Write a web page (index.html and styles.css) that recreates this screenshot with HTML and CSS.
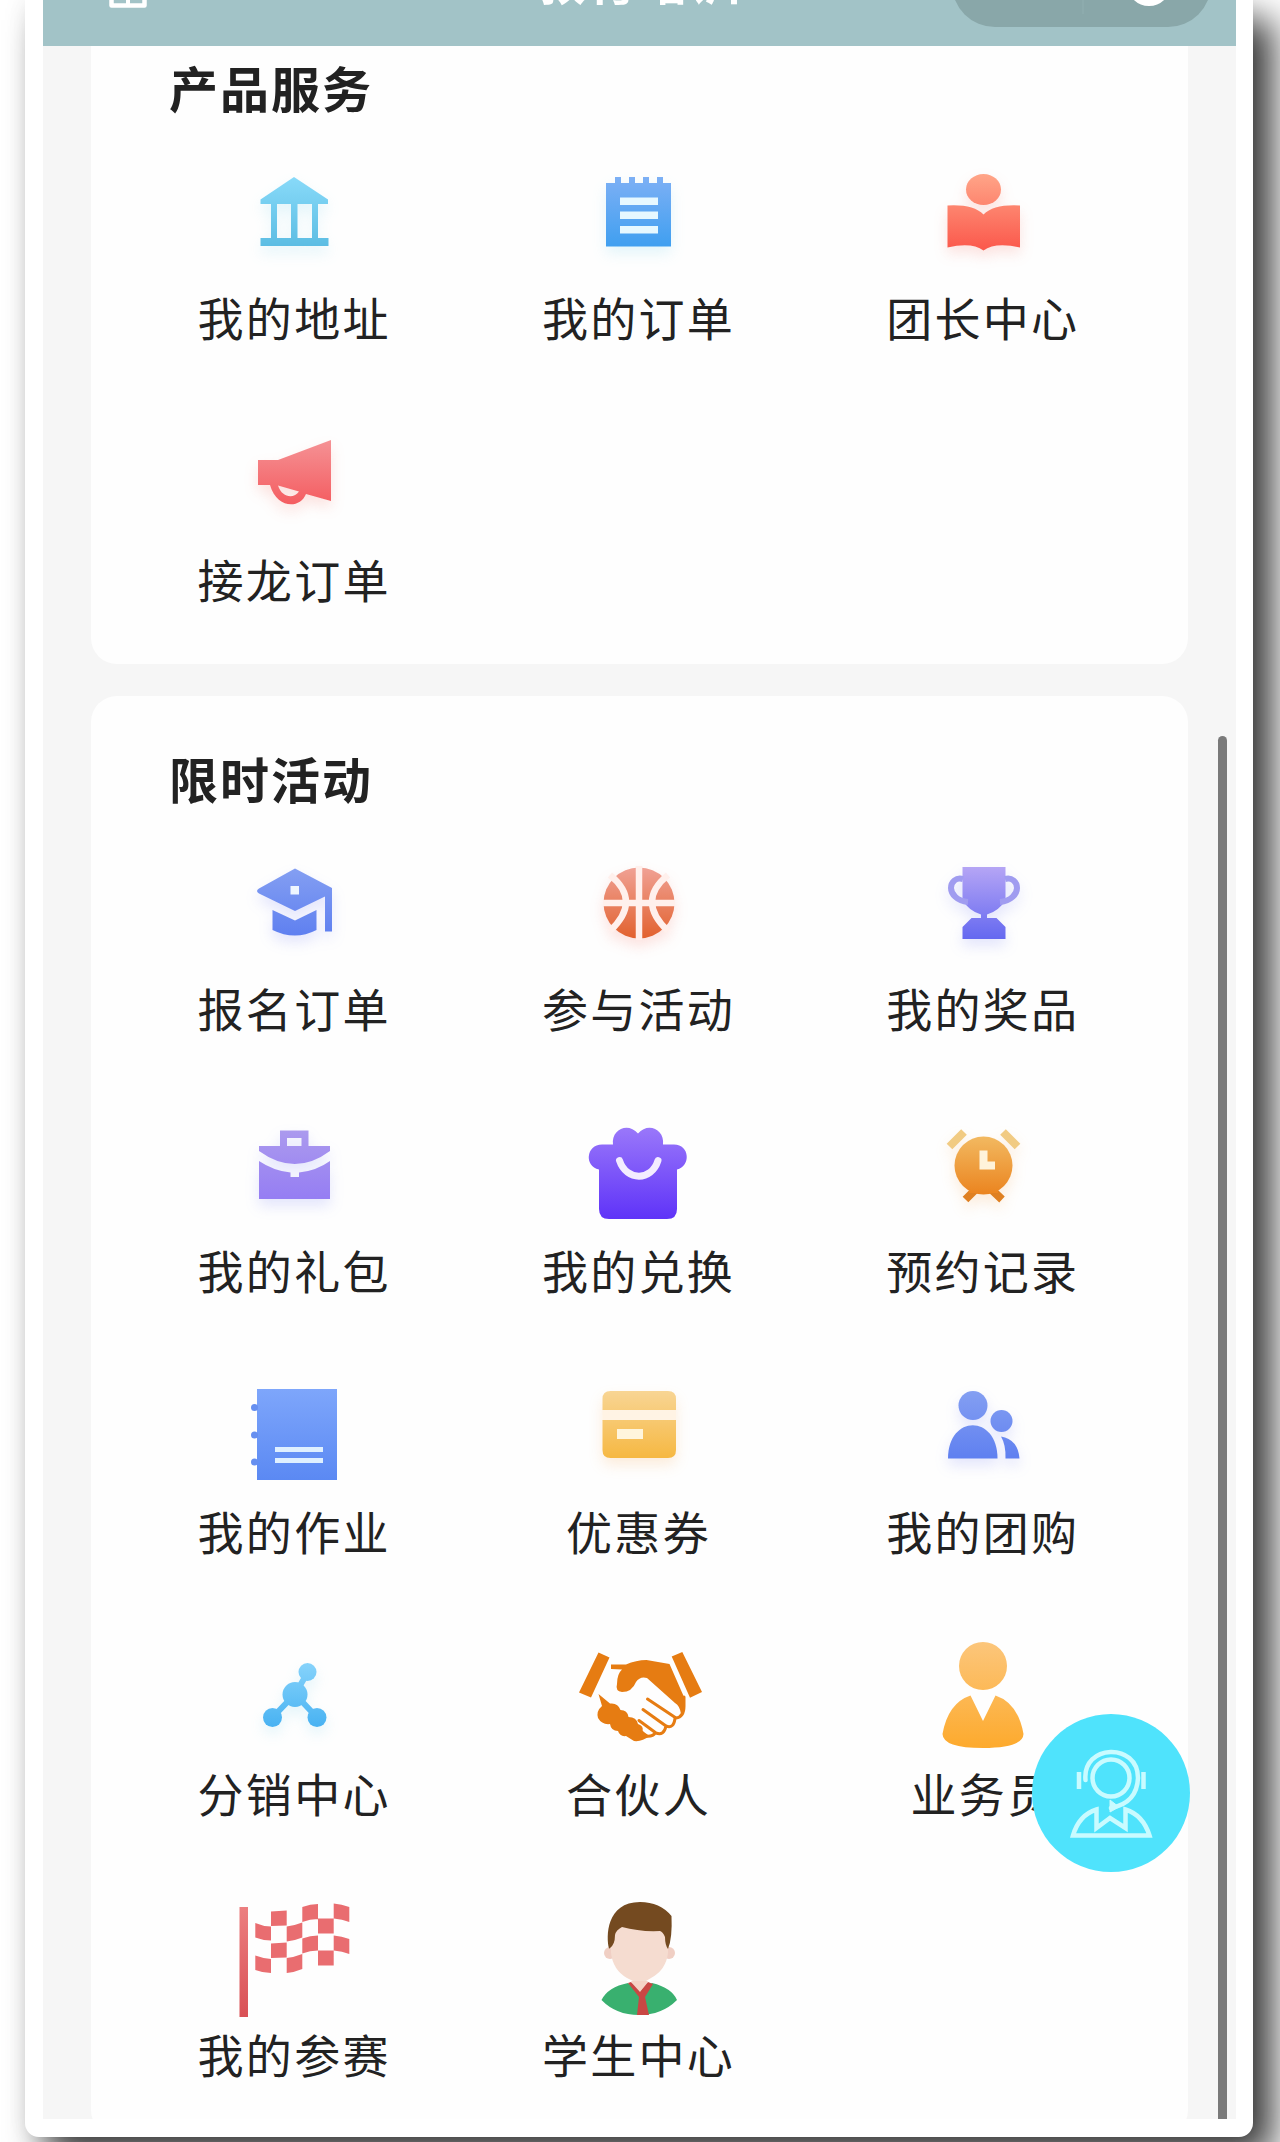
FILE: index.html
```html
<!DOCTYPE html>
<html lang="zh-CN">
<head>
<meta charset="utf-8">
<title>教育培训</title>
<link rel="stylesheet" href="styles.css">
</head>
<body>
<svg class="defs" width="0" height="0" aria-hidden="true">
  <defs>
    <linearGradient id="sky" x1="0" y1="0" x2="0" y2="1"><stop offset="0" stop-color="#88daf9"/><stop offset="1" stop-color="#5cbde3"/></linearGradient>
    <linearGradient id="blue" gradientUnits="userSpaceOnUse" x1="0" y1="27" x2="0" y2="97"><stop offset="0" stop-color="#7db0f5"/><stop offset="1" stop-color="#3f9ff0"/></linearGradient>
    <linearGradient id="coral" gradientUnits="userSpaceOnUse" x1="0" y1="24" x2="0" y2="98"><stop offset="0" stop-color="#ffa588"/><stop offset="1" stop-color="#fb5a4d"/></linearGradient>
    <linearGradient id="rose" gradientUnits="userSpaceOnUse" x1="0" y1="28" x2="0" y2="92"><stop offset="0" stop-color="#f59295"/><stop offset="1" stop-color="#f45d61"/></linearGradient>
    <linearGradient id="indigo" gradientUnits="userSpaceOnUse" x1="0" y1="27" x2="0" y2="96"><stop offset="0" stop-color="#849ff2"/><stop offset="1" stop-color="#5e7ff0"/></linearGradient>
    <linearGradient id="ball" gradientUnits="userSpaceOnUse" x1="0" y1="27" x2="0" y2="97"><stop offset="0" stop-color="#f0a194"/><stop offset="1" stop-color="#e2622f"/></linearGradient>
    <linearGradient id="cup" gradientUnits="userSpaceOnUse" x1="0" y1="26" x2="0" y2="98"><stop offset="0" stop-color="#b5a5f5"/><stop offset="1" stop-color="#6468f0"/></linearGradient>
    <linearGradient id="lilac" gradientUnits="userSpaceOnUse" x1="0" y1="27" x2="0" y2="97"><stop offset="0" stop-color="#ab9aee"/><stop offset="1" stop-color="#957df3"/></linearGradient>
    <linearGradient id="violet" gradientUnits="userSpaceOnUse" x1="0" y1="24" x2="0" y2="116"><stop offset="0" stop-color="#9a78fa"/><stop offset="1" stop-color="#5f33f8"/></linearGradient>
    <linearGradient id="orange" gradientUnits="userSpaceOnUse" x1="0" y1="27" x2="0" y2="97"><stop offset="0" stop-color="#f3bf68"/><stop offset="1" stop-color="#ea7f19"/></linearGradient>
    <linearGradient id="book" gradientUnits="userSpaceOnUse" x1="0" y1="25" x2="0" y2="116"><stop offset="0" stop-color="#7ea6fb"/><stop offset="1" stop-color="#5b89f3"/></linearGradient>
    <linearGradient id="sand" gradientUnits="userSpaceOnUse" x1="0" y1="27" x2="0" y2="94"><stop offset="0" stop-color="#f8d594"/><stop offset="1" stop-color="#f6b842"/></linearGradient>
    <linearGradient id="aqua" gradientUnits="userSpaceOnUse" x1="0" y1="37" x2="0" y2="101"><stop offset="0" stop-color="#86d3fb"/><stop offset="1" stop-color="#48b2f2"/></linearGradient>
    <linearGradient id="amber" gradientUnits="userSpaceOnUse" x1="0" y1="16" x2="0" y2="122"><stop offset="0" stop-color="#fcc67b"/><stop offset="1" stop-color="#fdaa2d"/></linearGradient>
    <linearGradient id="pole" x1="0" y1="0" x2="0" y2="1"><stop offset="0" stop-color="#ec7f80"/><stop offset="1" stop-color="#d95055"/></linearGradient>
  </defs>
</svg>

<div class="phone">
  <div class="screen">
    <header class="navbar">
      <svg class="home" viewBox="0 0 38 38"><path d="M2.500 12 19 2l16.500 10v23.500h-33z" fill="none" stroke="#fff" stroke-width="4.500" stroke-linejoin="round"/><path d="M19 18v17M4 27h30" stroke="#fff" stroke-width="4"/></svg>
      <h1 class="nav-title">教育培训</h1>
      <div class="capsule"><span class="divider"></span><span class="ring"></span></div>
    </header>

    <main class="cards">
      <section class="card card-services">
        <h2 class="card-title">产品服务</h2>
        <div class="grid">
          <a class="item"><svg class="icon glow-sky" viewBox="0 0 140 130"><path fill="url(#sky)" d="M70 27 104 49.500V54H94v34h10.500v8h-68v-8H47V54H36.500v-4.500zM53 54v34h14V54zM73.500 54v34H88V54z"/></svg><span class="label">我的地址</span></a>
          <a class="item"><svg class="icon glow-sky" viewBox="0 0 140 130"><path fill="url(#blue)" d="M38 33h9v-6h6v6h8v-6h6v6h8v-6h6v6h8v-6h6v6h8v63.500H38z"/><path fill="#e6f8ff" d="M52 47.500h38v7.500H52zM52 61.500h38V69H52zM52 76h38v7.500H52z"/></svg><span class="label">我的订单</span></a>
          <a class="item"><svg class="icon glow-red" viewBox="0 0 140 130"><g fill="url(#coral)"><ellipse cx="70.500" cy="39.500" rx="17.500" ry="15.500"/><path d="M34.500 55.500Q60 54 70.500 64.500 81 54 107 55.500v42Q82 92 70.500 100.500 59 92 34.500 97.500z"/></g></svg><span class="label">团长中心</span></a>
          <a class="item"><svg class="icon glow-red" viewBox="0 0 140 130"><path fill="url(#rose)" d="M34 48h20l53-20v61L82 82C76 97 53 97 46 73H34zM54 73.500C58 86 70 87 75 79.500z"/></svg><span class="label">接龙订单</span></a>
        </div>
      </section>

      <section class="card card-events">
        <h2 class="card-title">限时活动</h2>
        <div class="grid">
          <a class="item"><svg class="icon glow-blue" viewBox="0 0 140 130"><path fill="url(#indigo)" d="M71 27.500 108 47v43.500h-7V55.500L71 70 35 52.500q-4-2.500 0-5z"/><path fill="url(#indigo)" d="M48.500 69 71 79.500 92.500 69v20Q71 100 48.500 89z"/><path fill="#eef6ff" d="M66.500 45h8.500v8.500h-8.500z"/></svg><span class="label">报名订单</span></a>
          <a class="item"><svg class="icon glow-red" viewBox="0 0 140 130"><circle cx="71" cy="62" r="35.500" fill="url(#ball)"/><path d="M71 25v74M35 62h72M42 34q32 26 0 56M100 34q-32 26 0 56" fill="none" stroke="#fff0ec" stroke-width="6.500"/></svg><span class="label">参与活动</span></a>
          <a class="item"><svg class="icon glow-blue" viewBox="0 0 140 130"><path fill="url(#cup)" d="M49.500 26h43v33Q86 70 74 73.500V77h9.500l9 9v12h-43V86l9-9H68v-3.500Q56 70 49.500 59z"/><path d="M50 38c-7-2-12 3-12 9s6 13 17 14M92 38c7-2 12 3 12 9s-6 13-17 14" fill="none" stroke="#a09cf0" stroke-width="6"/></svg><span class="label">我的奖品</span></a>

          <a class="item"><svg class="icon glow-blue" viewBox="0 0 140 130"><path fill="url(#lilac)" d="M56 27.500h28.500v15.500H106v5Q71 74 35 48v-5h21zM63 35v8h14.500v-8z"/><path fill="url(#lilac)" d="M35 58q15 10 31.500 11.500V74H75v-4.500Q92 68 106 58v38H35z"/></svg><span class="label">我的礼包</span></a>
          <a class="item"><svg class="icon" viewBox="0 0 140 130"><path fill="url(#violet)" d="M45 41.500c-2-15 15-23 25-11 10-12 27-4 25 11h11c16 0 17 22 3 25V106q0 10-10 10H41q-10 0-10-10V66.500c-15-3-13-25 3-25z"/><path d="M51.500 57.500c7 21 32 21 38.500 0" fill="none" stroke="#f3ecff" stroke-width="7" stroke-linecap="round"/></svg><span class="label">我的兑换</span></a>
          <a class="item"><svg class="icon glow-orange" viewBox="0 0 140 130"><path d="M36.500 43.500 51 29M104.500 43.500 90 29" stroke="#f1cb83" stroke-width="8"/><path d="M52.500 96.500 62 87M89 96.500 79 87" stroke="#df8022" stroke-width="8"/><circle cx="70.500" cy="62.500" r="29" fill="url(#orange)"/><path fill="url(#orange)" d="M56 84h29v6H56z"/><path fill="#fff3da" d="M66.500 47.500h8v11H82v8H66.500z"/></svg><span class="label">预约记录</span></a>

          <a class="item"><svg class="icon" viewBox="0 0 140 130"><path fill="url(#book)" d="M33 25h80v91H33z"/><g fill="#668ff0"><circle cx="30.500" cy="43.500" r="3.500"/><circle cx="30.500" cy="71" r="3.500"/><circle cx="30.500" cy="98" r="3.500"/></g><path fill="#dff0ff" d="M51 83h48v5H51zM51 94h48v5H51z"/></svg><span class="label">我的作业</span></a>
          <a class="item"><svg class="icon glow-orange" viewBox="0 0 140 130"><path fill="#fff3e4" d="M34.500 45H108v12H34.500z"/><path fill="url(#sand)" d="M34.500 46V35q0-8 8-8H100q8 0 8 8v11zM34.500 56H108v30q0 8-8 8H42.500q-8 0-8-8z"/><path fill="#fff5dc" d="M49 65h26v10H49z"/></svg><span class="label">优惠券</span></a>
          <a class="item"><svg class="icon glow-blue" viewBox="0 0 140 130"><g fill="url(#indigo)"><circle cx="60" cy="41.500" r="14.500"/><path d="M35 94.500C35 50 84.500 50 84.500 94.500z"/><circle cx="88.500" cy="57" r="11"/><path d="M88 72.500q17 3 18.500 22H92.500Q93 81 88 72.500z"/></g></svg><span class="label">我的团购</span></a>

          <a class="item"><svg class="icon glow-sky" viewBox="0 0 140 130"><path d="M84 46 71 68 48.500 91.500M71 68l22 23.500" fill="none" stroke="url(#aqua)" stroke-width="6"/><g fill="url(#aqua)"><circle cx="83.500" cy="46" r="9"/><circle cx="71" cy="68.500" r="12.500"/><circle cx="48.500" cy="91.500" r="9.500"/><circle cx="93" cy="91.500" r="9.500"/></g></svg><span class="label">分销中心</span></a>
          <a class="item"><svg class="icon" viewBox="0 0 140 130"><g fill="#e67c12"><path d="M30.500 26.500 41.500 31.500 23 71.500 11 66.500zM103.700 30.500 114.300 26 134 66 122 71.800z"/><path d="M43 38.500H58Q68 34 78.500 34L101.500 38 116 71Q118 82 113 88 112 80 107 77L79 52Q72 50 68 56 64 66 54 66 47 65 49 58 49 48 54 43.500L43 43z"/><path d="M30.500 68 42 77.500q8-1 10.500 6.500 7 0 8 7 8 0 9.500 7 6 2 4.500 7l7 5Q74 116 66 115l-8-5q-6 1-8-5-7 0-8-7-8 1-12-6-2-7 4-12z"/></g><path d="M79.500 73 108 92q8-1 8-12v-9M75 83.500 98 100q8 3 9-8M71 94.500 88 107q8 3 10-7M72 104l5 6q8 1 10-3" fill="none" stroke="#e67c12" stroke-width="3" stroke-linecap="round" stroke-linejoin="round"/></svg><span class="label">合伙人</span></a>
          <a class="item"><svg class="icon" viewBox="0 0 140 130"><g fill="url(#amber)"><circle cx="70" cy="40" r="24"/><path d="M57.500 69.500 70 95 82.500 69.500Q105 77 110.500 108 110 122 70 122 30 122 29.500 108 35 77 57.500 69.500z"/></g></svg><span class="label">业务员</span></a>

          <a class="item"><svg class="icon" viewBox="0 0 140 130"><path fill="url(#pole)" d="M15.500 20H24v110h-8.500z"/><path fill="#e96d70" d="M31.300 36q8 3.500 15.700 3.500v14q-8 0-15.700-3zM31.300 68.500q8 3 15.700 3.500V86q-8 0-15.700-3zM47 24.500l15.700-1v15L47 39zM47 56.500l15.700-1v15L47 71zM62.700 39.500q8-1 15.600-4v15q-7 3-15.600 4zM62.700 71q8-1 15.600-4v15q-7 3-15.600 4zM78.300 20q8-3 15.700-3v15q-8 0-15.700 3zM78.300 51.500q8-3 15.700-3v15q-8 0-15.700 3zM94 31.500h15.700v15H94zM94 63.500h15.700v15H94zM109.700 16.500q8 .5 15.600 3.500v15q-7-3-15.600-3.500zM109.700 48.500q8 .5 15.600 3.500v15q-7-3-15.600-3.500z"/></svg><span class="label">我的参赛</span></a>
          <a class="item"><svg class="icon" viewBox="0 0 140 130"><g fill="#f0cfc4"><circle cx="42" cy="66" r="6"/><circle cx="101" cy="66" r="6"/></g><path fill="#f5dcd0" d="M43 36h57v30Q98 83 83 91l-5 3 3 10H62l3-10-6-3Q45 83 43 66z"/><path fill="#744a20" d="M41 61.500C38 50 38 15 72 15q20 0 31.500 14 1 22-3.500 33-3-4-3-12-2-5-5-6-20 1-38-4-6 3-7 8 0 10-5.500 13.500z"/><path fill="#39b06f" d="M33.500 113Q40 100 60 96l11 8 13-8q20 5 25 17-15 15-38 15t-37.500-15z"/><path fill="#f5d3c6" d="M63 94h17l-8 12z"/><path fill="#c94744" d="M60 96l3-1 9 10 8-10 5 2-8 13 4 18H69l2-18z"/></svg><span class="label">学生中心</span></a>
        </div>
      </section>
    </main>

    <div class="scrollbar"></div>
    <a class="service-button"><svg viewBox="0 0 158 158" fill="none" stroke="#c9fbff" stroke-width="4.500"><circle cx="79" cy="64" r="18.500"/><path d="M53.500 66C50 30 106 28 106 64q-1 25-27 30" stroke-linecap="round"/><path d="M78 86v12l9-5z" fill="#c9fbff" stroke-width="1"/><path d="M47 58v17M111.500 58v17"/><path d="M64.500 95.500v18.500l13.500-10 15.500 10V95.500Q111 101 117.500 121.500h-76.500Q47 101 64.500 95.500z"/></svg></a>
  </div>
</div>
</body>
</html>
```
FILE: styles.css
```css
* { box-sizing: border-box; }

body {
  margin: 0;
  height: 2142px;
  overflow: hidden;
  background: #fff;
  color: #222;
  font-family: "Noto Sans CJK SC", "Noto Sans", sans-serif;
}

.defs { position: absolute; }

.phone {
  width: 1228px;
  height: 2137px;
  margin-left: 25px;
  padding: 0 17px 18px 18px;
  background: #fff;
  border-radius: 0 0 14px 14px;
  box-shadow: 20px 20px 36px rgba(0, 0, 0, .78), 0 0 20px rgba(0, 0, 0, .06);
}

.screen {
  position: relative;
  height: 2119px;
  overflow: hidden;
  background: #f6f6f6;
}

.navbar {
  display: grid;
  grid-template-columns: minmax(0, 1fr) auto minmax(0, 1fr);
  grid-template-rows: 46px;
  align-items: end;
  height: 46px;
  overflow: hidden;
  padding: 0 25px;
  background: #a2c3c7;
}

.home { width: 38px; height: 38px; margin: 0 0 38px 41px; }

.nav-title {
  margin: 0 0 43px;
  color: #fff;
  font-size: 49px;
  font-weight: 700;
  line-height: 48px;
  letter-spacing: 2.500px;
}

.capsule {
  display: flex;
  justify-content: space-between;
  align-items: center;
  justify-self: end;
  width: 259px;
  height: 86px;
  margin-bottom: 19px;
  padding: 0 40px 0 130px;
  border-radius: 43px;
  background: #89a7a9;
}

.divider { width: 2px; height: 60px; background: #8dabad; }
.ring { width: 44px; height: 44px; border: 6px solid #fff; border-radius: 50%; }

.cards {
  display: flex;
  flex-direction: column;
  gap: 32px;
  padding: 0 48px;
}

.card { background: #fefefe; border-radius: 26px; padding: 0 33px 0 31px; }
.card-services { height: 618px; padding-top: 11px; border-radius: 0 0 26px 26px; }
.card-events { height: 1440px; padding-top: 52px; }

.card-title {
  height: 60px;
  margin: 0 0 33px 47px;
  font-size: 49px;
  font-weight: 700;
  line-height: 60px;
  letter-spacing: 2px;
}

.grid { display: grid; grid-template-columns: repeat(3, 1fr); grid-auto-rows: 261.500px; }
.item { display: flex; flex-direction: column; align-items: center; }
.icon { width: 140px; height: 130px; overflow: visible; }
.label {
  margin-top: 6px;
  font-size: 46px;
  line-height: 60px;
  letter-spacing: 2.300px;
  white-space: nowrap;
}

.glow-sky { filter: drop-shadow(0 7px 7px rgba(90, 200, 230, .16)); }
.glow-red { filter: drop-shadow(0 7px 7px rgba(240, 80, 60, .16)); }
.glow-blue { filter: drop-shadow(0 7px 7px rgba(90, 100, 240, .16)); }
.glow-orange { filter: drop-shadow(0 7px 7px rgba(240, 140, 40, .16)); }

/* Overlays above the scrolling content */
.scrollbar {
  position: absolute;
  top: 736px;
  right: 9px;
  width: 9px;
  height: 1383px;
  border-radius: 5px 5px 0 0;
  background: #7a7a7a;
}

.service-button {
  position: absolute;
  top: 1714px;
  right: 46px;
  width: 158px;
  height: 158px;
  border-radius: 50%;
  background: #4fe3fc;
}

.service-button svg { display: block; width: 158px; height: 158px; }
```
